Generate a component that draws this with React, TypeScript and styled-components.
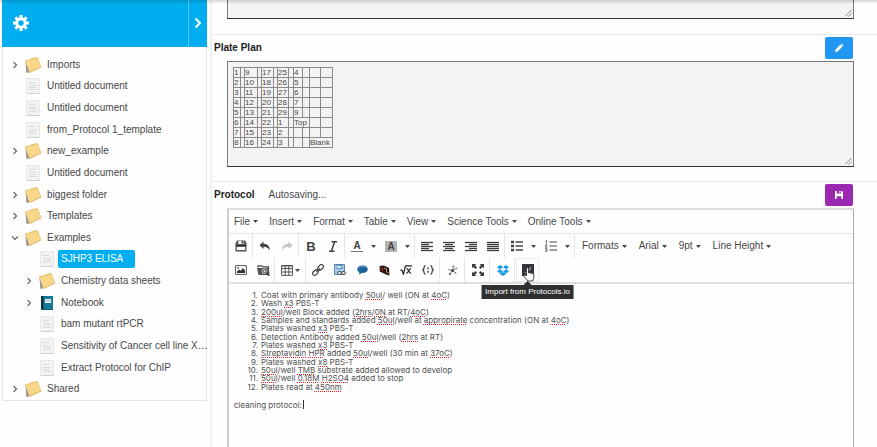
import React from "react";
import styled, { createGlobalStyle } from "styled-components";

const GlobalStyle = createGlobalStyle`
  *, *::before, *::after { box-sizing: border-box; }
  body {
    margin: 0;
    background: #fefefe;
    color: #484848;
    font: 10px/12px "Liberation Sans", Arial, sans-serif;
    overflow: hidden;
  }
  button { font: inherit; color: inherit; background: none; border: 0; padding: 0; }
  ul, ol { list-style: none; margin: 0; padding: 0; }
`;

/* ---------- Page shell ---------- */

const Page = styled.div`
  position: relative;
  display: flex;
  align-items: stretch;
  height: 100vh;
  overflow: hidden;
`;

const TopShade = styled.div`
  position: absolute;
  inset: 0 0 auto;
  height: 4px;
  background: linear-gradient(rgba(0, 0, 0, 0.16), rgba(0, 0, 0, 0));
  pointer-events: none;
`;

const Sidebar = styled.aside`
  flex: 0 0 205px;
  align-self: flex-start;
  margin: 0 3px 0 2px;
  border: 1px solid #e6e6e6;
  border-top: 0;
`;

const SidebarHeader = styled.div`
  display: flex;
  justify-content: space-between;
  height: 47px;
  margin: 0 -1px;
  background: #00aeef;
  color: #fff;
`;

const HeaderButton = styled.button<{ $divided?: boolean }>`
  display: flex;
  align-items: center;
  justify-content: center;
  width: ${(p) => (p.$divided ? "19px" : "38px")};
  padding-bottom: 2px;
  border-left: ${(p) => (p.$divided ? "1px solid #4fc6f2" : "0")};
`;

const Tree = styled.ul`
  display: grid;
  grid-auto-rows: 1fr;
  min-height: 346px;
  margin-top: 7px;
`;

const TreeItem = styled.li<{ $depth: number }>`
  display: flex;
  align-items: center;
  min-width: 0;
  padding-left: ${(p) => 7 + p.$depth * 14}px;
`;

const Toggle = styled.button`
  display: flex;
  justify-content: center;
  flex: 0 0 10px;
  height: 10px;
  margin-right: 4px;
`;

const TreeIcon = styled.span`
  display: flex;
  justify-content: center;
  flex: 0 0 18px;
  margin-right: 2px;
`;

const TreeLink = styled.a<{ $selected?: boolean }>`
  padding: 0 ${(p) => (p.$selected ? "12px" : "0")} 0 3px;
  border-radius: 2px;
  line-height: 18px;
  white-space: nowrap;
  text-decoration: none;
  color: ${(p) => (p.$selected ? "#fff" : "#484848")};
  background: ${(p) => (p.$selected ? "#00aeef" : "transparent")};
`;

const Main = styled.main`
  flex: 1;
  min-width: 0;
  border-left: 2px solid #f0f0f0;
`;

const Section = styled.section`
  border-bottom: 1px solid #e8e8e8;
`;

const SectionHeader = styled.header`
  display: flex;
  align-items: center;
  height: 26px;
  padding: 0 24px 0 2px;
`;

const SectionTitle = styled.h2`
  margin: 0;
  font-size: 10px;
  color: #1c1c1c;
`;

const Status = styled.span`
  margin-left: 14px;
`;

const ActionButton = styled.button<{ $color: string }>`
  display: flex;
  align-items: center;
  justify-content: center;
  width: 28px;
  height: 22px;
  margin-left: auto;
  border-radius: 2px;
  background: ${(p) => p.$color};
`;

const Field = styled.div<{ $clipped?: boolean }>`
  position: relative;
  height: ${(p) => (p.$clipped ? "19px" : "106px")};
  margin: 0 23px ${(p) => (p.$clipped ? "15px" : "14px")} 15px;
  padding: 5px;
  background: #f4f2f3;
  border: 1px solid #77767a;
  border-top-width: ${(p) => (p.$clipped ? "0" : "1px")};
  border-bottom-color: #333;
`;

const Grip = styled.svg`
  position: absolute;
  right: 1px;
  bottom: 1px;
`;

/* ---------- Plate table ---------- */

const Plate = styled.table`
  width: 99px;
  table-layout: fixed;
  border-collapse: collapse;
  border-right: 1px solid #303a38;
  font-size: 8px;
  line-height: 9px;
`;

const PlateCol = styled.col<{ $w: number }>`
  width: ${(p) => p.$w}px;
`;

const Well = styled.td`
  height: 10px;
  padding: 0;
  border: 1px solid #8a8a8a;
  white-space: nowrap;
`;

/* ---------- Editor ---------- */

const Editor = styled.div`
  min-height: 300px;
  margin: 0 23px 0 15px;
  border: 2px solid #ccc;
  border-right: 1px solid #aaa;
  border-top-color: #dcdcdc;
`;

const MenuBar = styled.div`
  display: flex;
  align-items: center;
  gap: 11px;
  height: 24px;
  padding: 0 5px;
  border-bottom: 1px solid #e3e3e3;
`;

const TextButton = styled.button`
  display: flex;
  align-items: center;
  gap: 3px;
  white-space: nowrap;
`;

const Toolbars = styled.div`
  border-bottom: 2px solid #dedede;
`;

const Toolbar = styled.div`
  display: flex;
  height: 24px;
`;

const Group = styled.div`
  display: flex;
  padding-left: 1px;
  border-right: 1px solid #e6e6e6;
  &:last-child { border-right: 0; }
`;

const TextGroup = styled.div`
  display: flex;
  gap: 12px;
  padding-left: 7px;
`;

const Tool = styled.button<{ $size?: "single" | "split" | "menu"; $hover?: boolean }>`
  position: relative;
  display: flex;
  align-items: center;
  justify-content: ${(p) => (p.$size === "split" ? "space-between" : "center")};
  gap: 2px;
  width: ${(p) => (p.$size === "split" ? "34px" : p.$size === "menu" ? "29px" : p.$size === "single" ? "23px" : "22px")};
  padding: ${(p) => (p.$size === "split" ? "0 4px 0 5px" : "0")};
  border: ${(p) => (p.$hover ? "1px solid #f7e9e9" : "0")};
`;

const Tooltip = styled.span`
  position: absolute;
  top: 26px;
  left: 50%;
  transform: translateX(-50%);
  padding: 0 4px;
  background: #2f2f2f;
  color: #fff;
  font-size: 8px;
  line-height: 14px;
  white-space: nowrap;
  z-index: 2;
  &::before {
    content: "";
    position: absolute;
    left: 50%;
    bottom: 100%;
    margin-left: -4px;
    border: 4px solid transparent;
    border-top-width: 0;
    border-bottom-color: #2f2f2f;
  }
`;

const Pointer = styled.svg`
  position: absolute;
  left: 6px;
  top: 8px;
  z-index: 3;
`;

const Content = styled.div`
  padding: 7px 5px;
  font-family: Inter, "Liberation Sans", sans-serif;
  font-size: 8px;
  line-height: 8px;
  color: #505050;
`;

const Steps = styled.ol`
  display: grid;
  grid-auto-rows: 1fr;
  min-height: 100px;
`;

const Step = styled.li`
  display: grid;
  grid-template-columns: 24px 1fr;
  column-gap: 3px;
  align-items: center;
  white-space: nowrap;
`;

const StepNumber = styled.span`
  text-align: right;
`;

const Misspelt = styled.span`
  text-decoration: underline dotted #ff2020 1px;
  text-underline-offset: 1px;
  text-decoration-skip-ink: none;
`;

const Paragraph = styled.p`
  display: flex;
  align-items: center;
  gap: 1px;
  margin: 9px 0 0;
`;

const TextCursor = styled.span`
  width: 1px;
  height: 9px;
  background: #333;
`;

/* ---------- Icons ---------- */

const Icon = ({ w = 12, h = w, vb, children }: { w?: number; h?: number; vb?: string; children: React.ReactNode }) => (
  <svg width={w} height={h} viewBox={vb ?? `0 0 ${w} ${h}`} fill="none" aria-hidden="true">
    {children}
  </svg>
);

const Caret = () => (
  <Icon w={5} h={3}><path d="M0 0h5L2.500 3z" fill="#484848" /></Icon>
);

const Chevron = ({ open }: { open?: boolean }) => (
  <Icon w={8} h={10}>
    <path d={open ? "M1 3.500l3 3 3-3" : "M2.500 2l3 3-3 3"} stroke="#666" strokeWidth="1.200" />
  </Icon>
);

const Folder = () => (
  <Icon w={18} h={18}>
    <path d="M1.500 5l.8 11.500 2 .5 1-2z" fill="#9a9590" />
    <path d="M.8 4.500L6 3.300l1-.8 5.500-1.500 1.500 1L17.300 11 5.500 16.500z" fill="#e9c272" />
    <path d="M1.500 5.200L7 4l6-1.700L16.800 11 5.600 15.700z" fill="#f8d78b" />
    <path d="M5 15.500l.8 1L17.300 11" stroke="#d5a84d" strokeWidth=".7" />
  </Icon>
);

const Doc = () => (
  <Icon w={14} h={16}>
    <path d="M.5.500h13v15H.5z" fill="#f3f3f3" stroke="#e6e6e6" />
    <path d="M1 15.500h12.500" stroke="#d0d0d0" />
    <path d="M3 4.500h6M3 7.500h8M3 9.500h7M3 11.500h8" stroke="#dadada" />
  </Icon>
);

const Notebook = () => (
  <Icon w={14} h={16}>
    <path d="M1 1h12v14H1z" fill="#16789b" />
    <path d="M1 1h2.500v14H1z" fill="#123244" />
    <path d="M5 4h6v4H5z" fill="#e4f1f5" />
    <path d="M6 5.500h4" stroke="#8cb8c8" />
    <path d="M1 14.500h12" stroke="#0f5872" />
  </Icon>
);

const Gear = () => (
  <Icon w={16} h={16}>
    <circle cx="8" cy="8" r="4.300" stroke="#fff" strokeWidth="3" />
    <path
      d="M8 0v3M8 13v3M0 8h3M13 8h3M2.350 2.350l2.100 2.100M11.550 11.550l2.100 2.100M2.350 13.650l2.100-2.100M11.550 4.450l2.100-2.100"
      stroke="#fff"
      strokeWidth="3"
    />
  </Icon>
);

const lines = (rows: Array<[number, number]>) => (
  <Icon w={12} h={11}>
    {rows.map(([x, w], i) => (
      <path key={i} d={`M${x} ${i * 2 + 1.5}h${w}`} stroke="#3c3c3c" strokeWidth="1.300" />
    ))}
  </Icon>
);

const Save = () => (
  <Icon w={12}>
    <path d="M2 .5h8l1.500 2.500v8.500H.5V3z" fill="#555" />
    <path d="M3.300 1h5.200v3H3.300z" fill="#fff" />
    <path d="M6.500 1H8v2.500H6.500z" fill="#444" />
    <path d="M1.800 7h8.400v3H1.800z" fill="#fff" />
    <path d="M.5 5.500h11" stroke="#333" />
  </Icon>
);

const Arrow = ({ redo }: { redo?: boolean }) => (
  <Icon w={12} h={10}>
    <path
      d={redo
        ? "M11.500 4.200L7.500.5v2.200C3.500 2.700 1 5 1.500 9.500 2.600 7 4.500 5.800 7.500 5.800V8z"
        : "M.5 4.200L4.500.5v2.200c4 0 6.500 2.300 6 6.800C9.400 7 7.500 5.800 4.500 5.800V8z"}
      fill={redo ? "#c6c6c6" : "#444"}
    />
  </Icon>
);

const ItalicIcon = () => (
  <Icon w={10} h={11}>
    <path d="M3.500.8H9M1 10.200h5.500M6.500 1L3.500 10" stroke="#444" strokeWidth="1.500" />
  </Icon>
);

const Letter = styled.span<{ $kind: "bold" | "fore" | "back" }>`
  width: ${(p) => (p.$kind === "bold" ? "auto" : "12px")};
  color: #444;
  font-weight: bold;
  font-size: ${(p) => (p.$kind === "bold" ? "13px" : "10px")};
  line-height: 11px;
  background: ${(p) => (p.$kind === "back" ? "#b4b4b4" : "transparent")};
  border-bottom: ${(p) => (p.$kind === "fore" ? "1px solid #777" : "0")};
`;

const Bullets = ({ numbered }: { numbered?: boolean }) => (
  <Icon w={12} h={12}>
    <path d="M4.500 2h7.500M4.500 6h7.500M4.500 10h7.500" stroke="#444" strokeWidth={numbered ? 1 : 1.5} />
    {numbered ? (
      <path d="M.5.700h1v2.800M.3 4.700h1.500v1.200H.6v1.400h1.600M.3 8.500h1.500v3H.3M.6 10h1" stroke="#444" strokeWidth=".8" />
    ) : (
      <path d="M0 .7h3v2.600H0zM0 4.700h3v2.600H0zM0 8.700h3v2.600H0z" fill="#444" />
    )}
  </Icon>
);

const Picture = () => (
  <Icon w={12} h={10}>
    <path d="M.6.600h10.800v8.800H.6z" stroke="#555" />
    <path d="M2 8V6.500l2.200-2 1.500 1.300L8 3l2 2.500V8z" fill="#333" />
    <circle cx="3.200" cy="2.800" r=".9" fill="#444" />
  </Icon>
);

const Browse = () => (
  <Icon w={13} h={11}>
    <path d="M1 2.500V.8h4l1 1h5.500v1.700" stroke="#444" strokeWidth="1.200" />
    <path d="M0 3h12l.5 7H1.500z" fill="#555" />
    <circle cx="7.500" cy="6.200" r="2.300" fill="#ddd" stroke="#fff" />
    <circle cx="7.500" cy="6.200" r="1.700" stroke="#333" />
    <path d="M9 7.800l3 3" stroke="#333" strokeWidth="1.400" />
  </Icon>
);

const Grid = () => (
  <Icon w={12} h={11}>
    <path d="M.6.600h10.800v9.800H.6zM.6 3.500h10.800M.6 7h10.800M4.200.600v9.800M7.800.600v9.800" stroke="#555" />
    <path d="M.5.800h11" stroke="#444" />
  </Icon>
);

const Link = () => (
  <Icon w={12}>
    <g transform="rotate(-45 6 6)" stroke="#444" strokeWidth="1.200">
      <rect x="-.8" y="4" width="6.500" height="4" rx="2" />
      <rect x="6.300" y="4" width="6.500" height="4" rx="2" />
      <path d="M3.500 6h5" />
    </g>
  </Icon>
);

const Gallery = () => (
  <Icon w={12}>
    <path d="M.5.500h10v10H.5z" fill="#a9cde8" stroke="#5a86aa" />
    <path d="M2.500 1h6v4h-6z" fill="#5e98c4" />
    <path d="M3 2h4v2H3z" fill="#d7e9f5" />
    <rect x="3.500" y="7.500" width="4" height="3" rx="1.500" stroke="#555" fill="#ddd" />
    <rect x="7.500" y="7.500" width="4" height="3" rx="1.500" stroke="#555" fill="#ddd" />
  </Icon>
);

const Comment = () => (
  <Icon w={11} h={10}>
    <ellipse cx="5.500" cy="4.200" rx="5.200" ry="3.800" fill="#1d629e" />
    <path d="M2.500 6.500L2 9.500l4-2z" fill="#1d629e" />
    <path d="M2 3.200c1-1.700 4.800-2 6.500-.7" stroke="#5a98ca" />
  </Icon>
);

const Chem = () => (
  <Icon w={11} h={11}>
    <path d="M.5 1l4.500-.5L10 3l.5 7.500L7 9.500.800 6.500z" fill="#2a1413" />
    <path d="M1.500 2l3 .5v4l-3-1z" fill="#702623" />
    <path d="M5 3l2.500 1v3L9.500 8" stroke="#d9b6ac" strokeWidth=".8" />
  </Icon>
);

const Root = () => (
  <Icon w={12} h={10}>
    <path d="M.3 5.500L1.800 5l1.700 4L5.500.8H12" stroke="#222" strokeWidth="1.200" />
    <path d="M6.500 3.300c2 0 2 5 4.500 5M11 3.300c-2 0-2.500 5-4.800 5" stroke="#222" strokeWidth="1.200" />
  </Icon>
);

const Code = () => (
  <Icon w={12} h={10}>
    <path d="M3.500.7C1 .7 3 4 .8 5 3 6 1 9.300 3.500 9.300M8.500.7C11 .7 9 4 11.200 5 9 6 11 9.300 8.500 9.300" stroke="#444" strokeWidth="1.300" />
    <path d="M6 2.500v1.800M6 5.800v2" stroke="#444" strokeWidth="1.500" />
  </Icon>
);

const Molecule = () => (
  <Icon w={11} h={11}>
    <path d="M1 4.500l4.500 1L10 3M5.500 5.500L6.500 1M5.500 5.500L3 9.500M5.500 5.500L8.500 8" stroke="#8a8a8a" />
    <circle cx="5.500" cy="5.500" r="1.500" fill="#444" />
    <circle cx="6.500" cy="1.500" r="1" fill="#777" />
    <circle cx="9.500" cy="3.500" r="1" fill="#999" />
    <circle cx="3" cy="9" r="1.200" fill="#777" />
    <circle cx="8.500" cy="8" r=".9" fill="#888" />
  </Icon>
);

const Expand = () => (
  <Icon w={12}>
    <path d="M0 0h4.300L3 1.300l2 2L3.500 5 1.300 3 0 4.300zM12 0v4.300L10.700 3 8.500 5 7 3.300l2-2L7.700 0zM0 12V7.700L1.300 9l2.200-2L5 8.700l-2 2L4.300 12zM12 12H7.700L9 10.700l-2-2L8.500 7l2.200 2L12 7.700z" fill="#3c3c3c" />
  </Icon>
);

const Dropbox = () => (
  <Icon w={12} h={11}>
    <path d="M3.300 0L6 2.200 2.700 4.300 0 2.200zM8.700 0L12 2.200 9.300 4.300 6 2.200zM0 6.300l2.700-2L6 6.300 3.300 8.400zM12 6.300l-2.700-2L6 6.300l2.700 2.100zM2.700 9.100L6 7l3.300 2.100L6 11z" fill="#159ae8" />
  </Icon>
);

const Protocols = () => (
  <Icon w={12}>
    <path d="M0 0h12v12H0z" fill="#34383b" />
    <path d="M3 9l2-1M5 6.500l1.500 1L9 3" stroke="#bcc3c6" />
  </Icon>
);

/* ---------- Data ---------- */

type Node = { label: string; kind: "folder" | "doc" | "notebook"; depth?: number; open?: boolean; selected?: boolean };

const nodes: Node[] = [
  { label: "Imports", kind: "folder" },
  { label: "Untitled document", kind: "doc" },
  { label: "Untitled document", kind: "doc" },
  { label: "from_Protocol 1_template", kind: "doc" },
  { label: "new_example", kind: "folder" },
  { label: "Untitled document", kind: "doc" },
  { label: "biggest folder", kind: "folder" },
  { label: "Templates", kind: "folder" },
  { label: "Examples", kind: "folder", open: true },
  { label: "SJHP3 ELISA", kind: "doc", depth: 1, selected: true },
  { label: "Chemistry data sheets", kind: "folder", depth: 1 },
  { label: "Notebook", kind: "notebook", depth: 1 },
  { label: "bam mutant rtPCR", kind: "doc", depth: 1 },
  { label: "Sensitivity of Cancer cell line X…", kind: "doc", depth: 1 },
  { label: "Extract Protocol for ChIP", kind: "doc", depth: 1 },
  { label: "Shared", kind: "folder" },
];

const nodeIcons = { folder: <Folder />, doc: <Doc />, notebook: <Notebook /> };

const plateColumns = [7, 4, 13, 4, 12, 4, 11, 5, 9, 7, 11, 12];
const plateRows = [
  ["1", "9", "17", "25", "4"],
  ["2", "10", "18", "26", "5"],
  ["3", "11", "19", "27", "6"],
  ["4", "12", "20", "28", "7"],
  ["5", "13", "21", "29", "9"],
  ["6", "14", "22", "1", "Top"],
  ["7", "15", "23", "2", ""],
  ["8", "16", "24", "3", ""],
];

const menus = ["File", "Insert", "Format", "Table", "View", "Science Tools", "Online Tools"];
const pickers = ["Formats", "Arial", "9pt", "Line Height"];

/* Words between asterisks are flagged by the spell checker. */
const steps = [
  "Coat with primary antibody *50ul*/ well (ON at *4oC*)",
  "Wash *x3* PBS-T",
  "*200ul*/well Block added (*2hrs*/*0N* at RT/*4oC*)",
  "Samples and standards added *50ul*/well at *appropirate* concentration (ON at *4oC*)",
  "Plates washed *x3* PBS-T",
  "Detection Antibody added *50ul*/well (*2hrs* at RT)",
  "Plates washed *x3* PBS-T",
  "*Streptavidin* *HPR* added *50ul*/well (30 min at *37oC*)",
  "Plates washed *x8* PBS-T",
  "*50ul*/well *TMB* substrate added allowed to develop",
  "*50ul*/well *0.18M* *H2SO4* added to stop",
  "Plates read at *450nm*",
];

const Checked = ({ text }: { text: string }) => (
  <span>{text.split("*").map((part, i) => (i % 2 ? <Misspelt key={i}>{part}</Misspelt> : part))}</span>
);

const ResizeGrip = () => (
  <Grip width="7" height="7" viewBox="0 0 7 7" aria-hidden="true">
    <path d="M0 6.500L6.500 0M3.500 6.500l3-3" stroke="#8a8a8a" />
  </Grip>
);

/* ---------- Views ---------- */

const Navigation = () => (
  <Sidebar>
    <SidebarHeader>
      <HeaderButton aria-label="Settings"><Gear /></HeaderButton>
      <HeaderButton $divided aria-label="Collapse panel">
        <Icon w={8} h={12}><path d="M1.500 1.500L6 6l-4.500 4.500" stroke="#fff" strokeWidth="2" /></Icon>
      </HeaderButton>
    </SidebarHeader>
    <Tree>
      {nodes.map((n, i) => (
        <TreeItem key={i} $depth={n.depth ?? 0}>
          {n.kind === "doc" ? (
            <Toggle as="span" />
          ) : (
            <Toggle aria-label={`Toggle ${n.label}`} aria-expanded={!!n.open}><Chevron open={n.open} /></Toggle>
          )}
          <TreeIcon>{nodeIcons[n.kind]}</TreeIcon>
          <TreeLink href="#" $selected={n.selected}>{n.label}</TreeLink>
        </TreeItem>
      ))}
    </Tree>
  </Sidebar>
);

const PlateTable = () => (
  <Plate>
    <colgroup>{plateColumns.map((w, i) => <PlateCol key={i} $w={w} />)}</colgroup>
    <tbody>
      {plateRows.map(([a, b, c, d, e], i) => (
        <tr key={a}>
          <Well>{a}</Well><Well />
          <Well>{b}</Well><Well />
          <Well>{c}</Well><Well />
          <Well>{d}</Well><Well />
          {e === "Top" ? <Well colSpan={2}>{e}</Well> : <><Well>{e}</Well><Well /></>}
          {i === 7 ? <Well colSpan={2}>Blank</Well> : <><Well /><Well /></>}
        </tr>
      ))}
    </tbody>
  </Plate>
);

const FormatToolbar = () => (
  <Toolbar>
    <Group><Tool aria-label="Save"><Save /></Tool></Group>
    <Group>
      <Tool aria-label="Undo"><Arrow /></Tool>
      <Tool aria-label="Redo"><Arrow redo /></Tool>
    </Group>
    <Group>
      <Tool aria-label="Bold"><Letter $kind="bold">B</Letter></Tool>
      <Tool aria-label="Italic"><ItalicIcon /></Tool>
    </Group>
    <Group>
      <Tool $size="split" aria-label="Text color"><Letter $kind="fore">A</Letter><Caret /></Tool>
      <Tool $size="split" aria-label="Background color"><Letter $kind="back">A</Letter><Caret /></Tool>
    </Group>
    <Group>
      <Tool aria-label="Align left">{lines([[0, 12], [0, 8], [0, 12], [0, 8], [0, 12]])}</Tool>
      <Tool aria-label="Align center">{lines([[0, 12], [2, 8], [0, 12], [2, 8], [0, 12]])}</Tool>
      <Tool aria-label="Align right">{lines([[0, 12], [4, 8], [0, 12], [4, 8], [0, 12]])}</Tool>
      <Tool aria-label="Justify">{lines([[0, 12], [0, 12], [0, 12], [0, 12], [0, 12]])}</Tool>
    </Group>
    <Group>
      <Tool $size="split" aria-label="Bullet list"><Bullets /><Caret /></Tool>
      <Tool $size="split" aria-label="Numbered list"><Bullets numbered /><Caret /></Tool>
    </Group>
    <TextGroup>
      {pickers.map((p) => <TextButton key={p}>{p}<Caret /></TextButton>)}
    </TextGroup>
  </Toolbar>
);

const InsertToolbar = () => (
  <Toolbar>
    <Group>
      <Tool aria-label="Insert image"><Picture /></Tool>
      <Tool aria-label="Browse files"><Browse /></Tool>
    </Group>
    <Group><Tool $size="menu" aria-label="Table"><Grid /><Caret /></Tool></Group>
    <Group>
      <Tool aria-label="Insert link"><Link /></Tool>
      <Tool aria-label="Gallery"><Gallery /></Tool>
      <Tool aria-label="Comment"><Comment /></Tool>
      <Tool aria-label="Chemistry"><Chem /></Tool>
      <Tool aria-label="Equation"><Root /></Tool>
      <Tool aria-label="Code sample"><Code /></Tool>
    </Group>
    <Group><Tool $size="single" aria-label="Molecule"><Molecule /></Tool></Group>
    <Group><Tool $size="single" aria-label="Fullscreen"><Expand /></Tool></Group>
    <Group><Tool $size="single" aria-label="Dropbox"><Dropbox /></Tool></Group>
    <Group>
      <Tool $size="single" $hover aria-label="Import from Protocols.io">
        <Protocols />
        <Tooltip role="tooltip">Import from Protocols.io</Tooltip>
        <Pointer width="12" height="15" viewBox="0 0 12 15" aria-hidden="true">
          <path
            d="M3.500 8V1.800c0-1.300 2-1.300 2 0V6c.5-.8 1.700-.6 1.800.3.600-.6 1.600-.3 1.700.5.800-.5 1.800 0 1.800 1v3L9.700 14H5L1.200 9.500C.5 8.300 2 7.500 2.800 8.300l.7.700z"
            fill="#fff"
            stroke="#333"
            strokeWidth=".9"
          />
        </Pointer>
      </Tool>
    </Group>
  </Toolbar>
);

export default function App() {
  return (
    <>
      <GlobalStyle />
      <Page>
        <Navigation />
        <Main>
          <Section><Field $clipped><ResizeGrip /></Field></Section>
          <Section>
            <SectionHeader>
              <SectionTitle>Plate Plan</SectionTitle>
              <ActionButton $color="#2196f3" aria-label="Edit">
                <Icon w={10}>
                  <path d="M1 9l.6-2.500L6.500 1.600l2 2L3.500 8.400zM7 1.200l.7-.7 1.900 1.900-.7.700z" fill="#fff" />
                </Icon>
              </ActionButton>
            </SectionHeader>
            <Field><PlateTable /><ResizeGrip /></Field>
          </Section>
          <SectionHeader>
            <SectionTitle>Protocol</SectionTitle>
            <Status>Autosaving...</Status>
            <ActionButton $color="#9c27b0" aria-label="Save section">
              <Icon w={8}>
                <path d="M0 0h1.800v2.500h4.400V0H7l1 1v7H6.300V5.300H1.700V8H0zM4.300 0h1.200v1.800H4.300z" fill="#fff" />
              </Icon>
            </ActionButton>
          </SectionHeader>
          <Editor>
            <MenuBar>{menus.map((m) => <TextButton key={m}>{m}<Caret /></TextButton>)}</MenuBar>
            <Toolbars><FormatToolbar /><InsertToolbar /></Toolbars>
            <Content>
              <Steps>
                {steps.map((s, i) => (
                  <Step key={i}><StepNumber>{i + 1}.</StepNumber><Checked text={s} /></Step>
                ))}
              </Steps>
              <Paragraph>cleaning protocol:<TextCursor /></Paragraph>
            </Content>
          </Editor>
        </Main>
        <TopShade />
      </Page>
    </>
  );
}
